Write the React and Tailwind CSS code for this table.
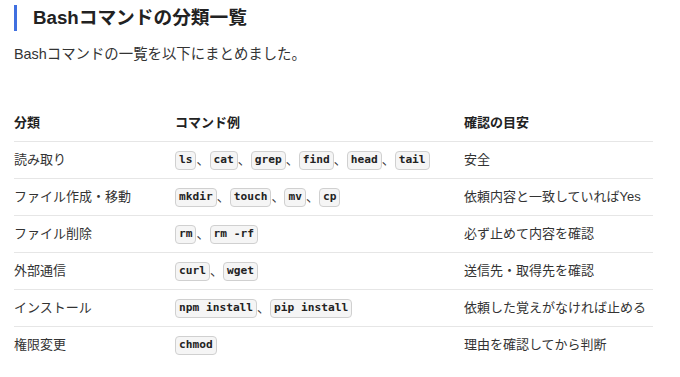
import React from 'react';

const rows = [
  { kind: '読み取り', cmds: ['ls', 'cat', 'grep', 'find', 'head', 'tail'], note: '安全' },
  { kind: 'ファイル作成・移動', cmds: ['mkdir', 'touch', 'mv', 'cp'], note: '依頼内容と一致していればYes' },
  { kind: 'ファイル削除', cmds: ['rm', 'rm -rf'], note: '必ず止めて内容を確認' },
  { kind: '外部通信', cmds: ['curl', 'wget'], note: '送信先・取得先を確認' },
  { kind: 'インストール', cmds: ['npm install', 'pip install'], note: '依頼した覚えがなければ止める' },
  { kind: '権限変更', cmds: ['chmod'], note: '理由を確認してから判断' },
];

const Code = ({ children }) => (
  <code className="inline-block rounded-[4px] border border-[#d0d0d0] bg-[#f5f5f5] px-[3px] py-[1.5px] font-['DejaVu_Sans_Mono',monospace] text-[11.2px] font-bold leading-[14px] text-[#222] whitespace-pre">
    {children}
  </code>
);

export default function App() {
  return (
    <div className="w-[680px] h-[377px] overflow-hidden bg-white px-[14px] font-['Liberation_Sans','Noto_Sans_CJK_JP',sans-serif] text-[#333]">
      {/* Heading */}
      <h2 className="mt-[5px] flex h-[26px] items-center border-l-[3px] border-[#4070e0] pl-[16px] text-[18.7px] font-bold text-[#222]">
        Bashコマンドの分類一覧
      </h2>

      <p className="mt-[13px] text-[14.4px] leading-[20px]">Bashコマンドの一覧を以下にまとめました。</p>

      {/* Table */}
      <div className="mt-[41px] w-[639px] text-[13px]">
        <div className="grid h-[36px] grid-cols-[161px_289px_189px] items-center font-bold text-[#222]">
          <div>分類</div>
          <div>コマンド例</div>
          <div>確認の目安</div>
        </div>
        {rows.map((r) => (
          <div
            key={r.kind}
            className="grid h-[37px] grid-cols-[161px_289px_189px] items-center border-t border-[#e6e6e6]"
          >
            <div>{r.kind}</div>
            <div className="flex items-center">
              {r.cmds.map((c, i) => (
                <React.Fragment key={c}>
                  <Code>{c}</Code>
                  {i < r.cmds.length - 1 && <span className="text-[13px]">、</span>}
                </React.Fragment>
              ))}
            </div>
            <div>{r.note}</div>
          </div>
        ))}
      </div>
    </div>
  );
}
